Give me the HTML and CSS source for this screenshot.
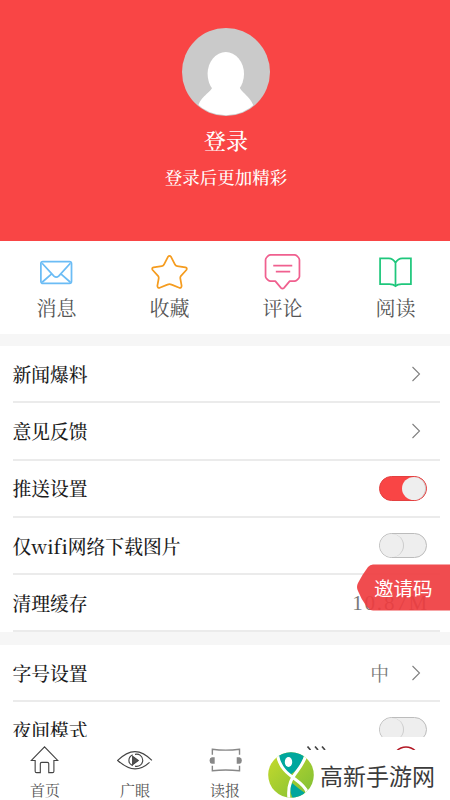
FILE: index.html
```html
<!DOCTYPE html>
<html lang="zh-CN">
<head>
<meta charset="utf-8">
<title>我的</title>
<link rel="stylesheet" href="styles.css">
</head>
<body>
<main class="app">
  <header class="profile">
    <svg class="avatar" viewBox="0 0 88 88">
      <defs><clipPath id="disc"><circle cx="44" cy="44" r="43.2"/></clipPath></defs>
      <circle cx="44" cy="44" r="44" fill="#cacaca"/>
      <g clip-path="url(#disc)" fill="#fff"><ellipse cx="43.800" cy="46" rx="18.200" ry="22"/><path d="M31 58C28 66 19 67 15.500 80v10h57V80C68 67 60 66 57 58z"/></g>
    </svg>
    <h1 class="login">登录</h1>
    <p class="hint">登录后更加精彩</p>
  </header>
  <nav class="shortcuts">
    <a class="shortcut">
      <svg class="shortcut-icon" viewBox="0 0 36 36" stroke="#6bbcf5"><rect x="2.800" y="7.300" width="29.800" height="21.300" rx="2"/><path d="M4 9l11.500 12.500q2.300 2 4.600 0L31.500 9M4 27.500l9-8M31.500 27.500l-9-8"/></svg>
      <span>消息</span>
    </a>
    <a class="shortcut">
      <svg class="shortcut-icon" viewBox="0 0 36 36" stroke="#f59c1f"><path d="M16.500 2.700q1.500-1.800 3 0L23.500 10.500q.8 1.200 2 1.300l8 1.300q2.200.6.900 2.500L29 21.500q-.7 1-.5 2.200l1.300 7.300q0 2.200-2.300 1.900L20 29.800q-2-1-4 0l-7.500 3.100q-2.300.3-2.300-1.900l1.300-7.300q.2-1.200-.5-2.200L1.600 15.600q-1.300-1.900.9-2.500l8-1.300q1.200-.1 2-1.300z"/></svg>
      <span>收藏</span>
    </a>
    <a class="shortcut">
      <svg class="shortcut-icon" viewBox="0 0 36 36" stroke="#f0608f"><path d="M6.500.9h23q1.500 0 2.500 1l1.500 1.500q1 1 1 2.500v16q0 1-1 2l-1.500 1.500q-1 1-2.500 1h-4.500l-5.500 6.500q-1.500 1.500-3 0L11 26.400H6.500q-1.500 0-2.500-1l-1.500-1.500q-1-1-1-2v-16q0-1.500 1-2.500L4 1.900q1-1 2.500-1zM9 11.400h18.500M11.500 17.200h14"/></svg>
      <span>评论</span>
    </a>
    <a class="shortcut">
      <svg class="shortcut-icon" viewBox="0 0 36 36" stroke="#1fc77c"><path stroke-linejoin="miter" d="M18 8.500q-2.500-4.300-6.500-4.300H3v25h9q4 0 6 2 2-2 6-2h9v-25h-8.500q-4 0-6.500 4.300zv22"/></svg>
      <span>阅读</span>
    </a>
  </nav>
  <section class="group">
    <div class="row"><span>新闻爆料</span><svg class="chevron" viewBox="0 0 10 16"><path d="M1.500 1l7 7-7 7"/></svg></div>
    <div class="row"><span>意见反馈</span><svg class="chevron" viewBox="0 0 10 16"><path d="M1.500 1l7 7-7 7"/></svg></div>
    <div class="row"><span>推送设置</span><span class="switch on"></span></div>
    <div class="row"><span>仅wifi网络下载图片</span><span class="switch"></span></div>
    <div class="row"><span>清理缓存</span><span class="cache">10.87M</span></div>
  </section>
  <section class="group">
    <div class="row"><span>字号设置</span><span class="value">中</span><svg class="chevron" viewBox="0 0 10 16"><path d="M1.500 1l7 7-7 7"/></svg></div>
    <div class="row"><span>夜间模式</span><span class="switch"></span></div>
  </section>
  <a class="invite"><svg class="invite-shape" viewBox="0 0 94 47"><path d="M94 .5H17q-3 0-5 2.500Q6 11 2 19q-2 4 0 8 3 8 9 16 3 3.500 6 3.500h77z"/></svg><span>邀请码</span></a>
  <nav class="tabs">
    <a class="tab">
      <svg class="tab-icon" viewBox="0 0 40 32"><path d="M5.500 16.500L19.500 2l14 14.500h-4V28q0 1.500-1.500 1.500h-4V20q0-1.500-1.500-1.500h-6Q15 18.500 15 20v9.500h-4Q9.500 29.500 9.500 28V16.500z"/></svg>
      <span>首页</span>
    </a>
    <a class="tab">
      <svg class="tab-icon" viewBox="0 0 40 32"><path d="M35.500 18.500Q28 25.500 20 25.500T1.500 16.500Q11 7 20 7t18 9.500"/><path d="M17.500 10.500q-4 2-4 6t4 5.500M20 10a6.500 6.500 0 1 1 0 12.500"/><path fill="#555" d="M17.500 12v9l6-4.500z"/></svg>
      <span>广眼</span>
    </a>
    <a class="tab">
      <svg class="tab-icon" viewBox="0 0 40 32"><path stroke="#888" stroke-width="1.500" d="M6.500 10.500V4.500q14 2 29 0v6M6.500 22v5.500q14-1.500 29 0V22"/><path fill="#888" stroke="none" d="M9 13v7H6q-2.500-.5-2.500-3.500T6 13zM32.500 13v7h3q2.500-.5 2.500-3.500T35.500 13z"/></svg>
      <span>读报</span>
    </a>
    <a class="tab"><svg class="tab-icon" viewBox="0 0 40 32"><path stroke-width="1.700" d="M12.500 1.500l3 3.500M20 1.500l3 3.500M27 1.500l3 3.500"/></svg></a>
    <a class="tab"><svg class="tab-icon" viewBox="0 0 40 32"><circle cx="21" cy="15" r="13" stroke="#b31825" stroke-width="1.600"/></svg></a>
  </nav>
  <aside class="brand">
    <svg class="brand-logo" viewBox="0 0 46 46">
      <defs><linearGradient id="lime" x1="0" y1="0" x2="1" y2="1"><stop offset="0" stop-color="#c8db2c"/><stop offset="1" stop-color="#7dbe35"/></linearGradient><clipPath id="logo"><circle cx="23" cy="23" r="22.800"/></clipPath></defs>
      <g clip-path="url(#logo)"><path fill="url(#lime)" d="M0 0h46v46H0z"/><path fill="#00a79d" d="M9 0C12 10 15 17 22 23 30 18 34 12 37 0zM24 31q-4 6 1 16h7l5-6Q31 37 24 31z"/><path fill="none" stroke="#fff" stroke-width="3" d="M9.500 3C13 25 35 27 39 40M38 3C33 21 18 23 21 47"/><ellipse cx="20.500" cy="10" rx="3.700" ry="4.900" fill="#fff"/></g>
    </svg>
    <span>高新手游网</span>
  </aside>
</main>
</body>
</html>
```
FILE: styles.css
```css
* { box-sizing: border-box; }
body { margin: 0; }
.app {
  position: relative;
  width: 450px;
  height: 800px;
  overflow: hidden;
  background: #f6f6f6;
  color: #1b1b1b;
  font-family: "Noto Serif CJK SC", "Noto Serif SC", "Source Han Serif SC", "Noto Sans CJK SC", serif;
  font-variant-ligatures: none;
}
.profile {
  height: 241px;
  padding: 28px 0 0 2px;
  display: flex;
  flex-direction: column;
  align-items: center;
  background: #f94545;
  color: #fff;
}
.avatar { width: 88px; height: 88px; }
.login { margin: 8px 0 0; font-size: 22px; font-weight: 500; line-height: 32px; }
.hint { margin: 9px 0 0; font-size: 17.5px; font-weight: 500; line-height: 24px; }
.shortcuts { display: grid; grid-template-columns: repeat(4, 113px); height: 92.500px; background: #fff; color: #555; }
.shortcut {
  padding-top: 13px;
  display: flex;
  flex-direction: column;
  align-items: center;
  font-size: 20px;
  line-height: 30px;
}
.shortcut-icon { width: 37px; height: 37px; margin-bottom: 2px; fill: none; stroke-width: 1.700; stroke-linejoin: round; }
.group { margin-top: 12.500px; padding-left: 12.500px; background: #fff; }
.row {
  height: 57.300px;
  margin-right: 10px;
  padding-right: 13px;
  display: flex;
  align-items: center;
  border-bottom: 2px solid #ebebeb;
  font-size: 18.800px;
  font-weight: 500;
}
.row > :first-child { margin-right: auto; }
.row > :first-child, .value { padding-bottom: 1px; }
.chevron { width: 10px; height: 16px; margin-right: 6px; fill: none; stroke: #808080; stroke-width: 1.100; }
.value { margin-right: 22px; color: #777; font-weight: 400; }
.cache { color: #777; font: 21px "Liberation Serif", serif; letter-spacing: 1.800px; margin-right: -2px; padding-top: 1px; }
.switch {
  width: 48px;
  height: 25px;
  display: flex;
  border: 1.500px solid #bcbcbc;
  border-radius: 13px;
  background: #eee;
}
.switch::before { content: ""; width: 23px; height: 23px; border-right: 1px solid #ccc; border-radius: 50%; background: #eee; }
.switch.on { justify-content: flex-end; background: #f94545; border-color: #e34040; }
.invite {
  position: absolute;
  right: 0;
  top: 564px;
  width: 94px;
  height: 47px;
  padding-left: 18px;
  color: #fff;
  font: 19.500px/47px "Noto Sans CJK SC", sans-serif;
}
.invite-shape { position: absolute; inset: 0; width: 94px; height: 47px; fill: #ef3d40; fill-opacity: .92; }
.invite span { position: relative; }
.tabs {
  position: absolute;
  left: 0;
  bottom: 0;
  width: 450px;
  height: 63px;
  padding-top: 8px;
  display: flex;
  background: #fff;
  color: #555;
}
.tab { flex: 1; display: flex; flex-direction: column; align-items: center; font-size: 15px; line-height: 20px; }
.tab-icon { width: 40px; height: 32px; margin-bottom: 5px; fill: none; stroke: #444; stroke-width: 1.200; }
.brand {
  position: absolute;
  right: 0;
  bottom: 0;
  width: 183px;
  height: 50px;
  padding: 0 0 1px 1px;
  display: flex;
  align-items: center;
  gap: 6px;
  background: #fff;
  color: #3c3c3c;
  font: 23px/40px "Noto Sans CJK SC", sans-serif;
}
.brand-logo { flex: none; width: 46px; height: 46px; }
```
